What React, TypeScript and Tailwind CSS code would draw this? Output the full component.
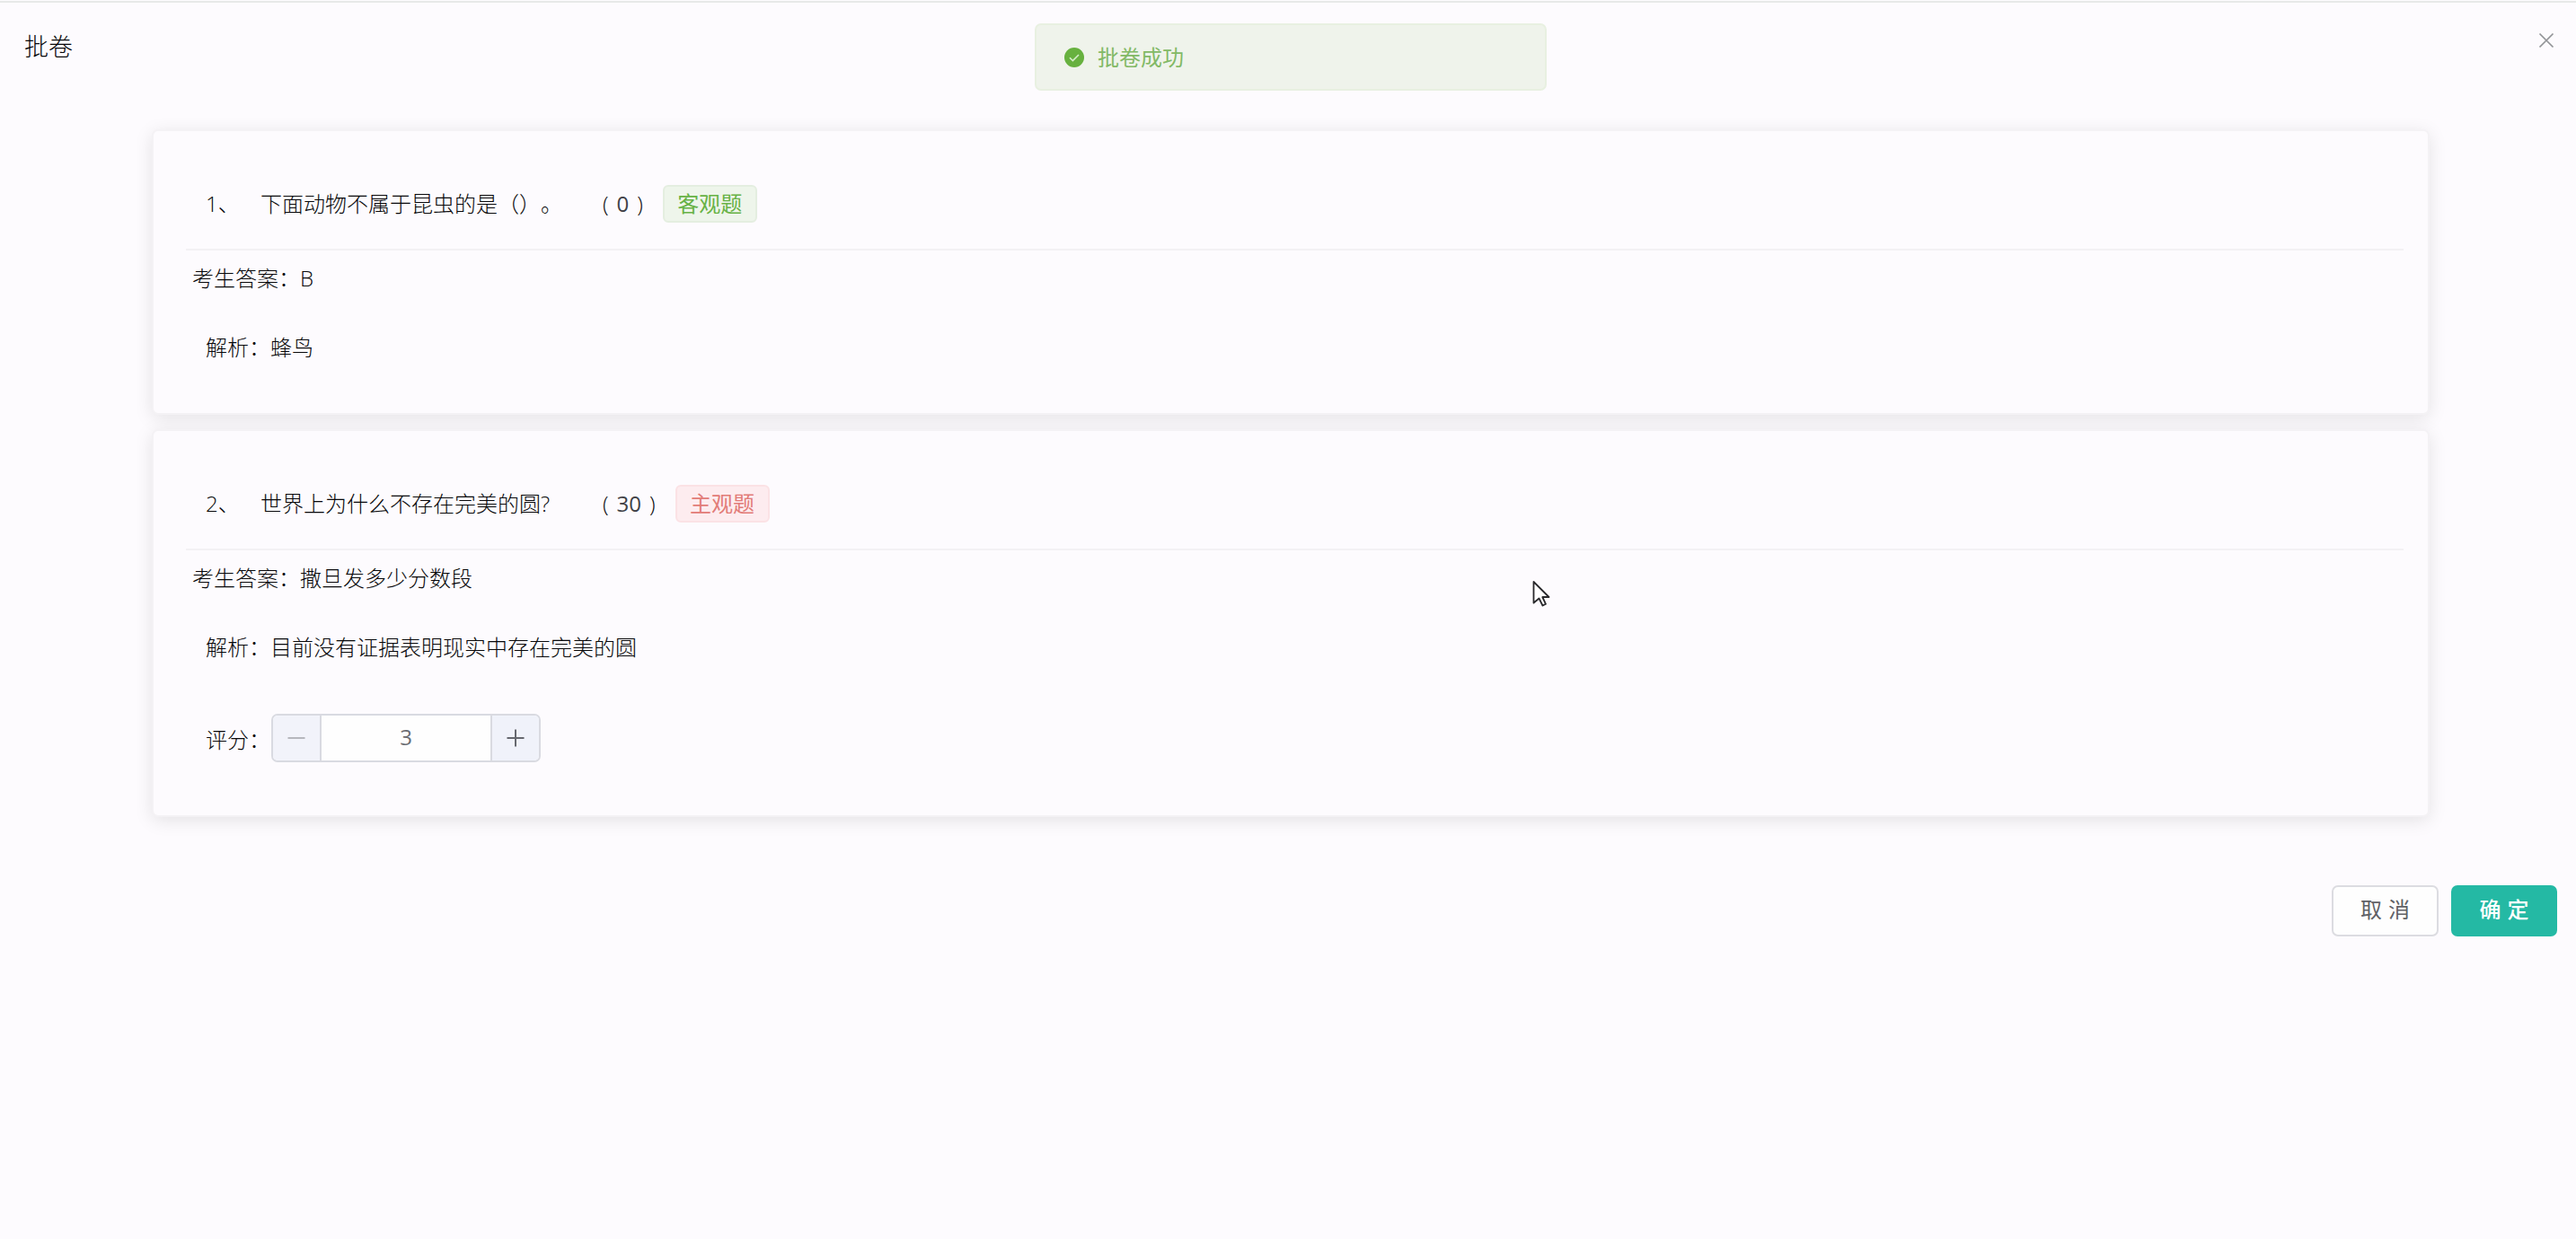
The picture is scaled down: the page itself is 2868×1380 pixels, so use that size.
import { useState, type ReactNode } from "react";

type Question = {
  id: number;
  title: string;
  score: number;
  subjective: boolean;
  answer: string;
  analysis: string;
};

const questions: Question[] = [
  {
    id: 1,
    title: "下面动物不属于昆虫的是（）。",
    score: 0,
    subjective: false,
    answer: "B",
    analysis: "蜂鸟",
  },
  {
    id: 2,
    title: "世界上为什么不存在完美的圆?",
    score: 30,
    subjective: true,
    answer: "撒旦发多少分数段",
    analysis: "目前没有证据表明现实中存在完美的圆",
  },
];

function Tag({ subjective }: { subjective: boolean }) {
  return (
    <span
      className={
        subjective
          ? "ml-[22px] flex h-[42px] w-[105px] items-center justify-center rounded-[6px] border-2 border-[#fbe2e5] bg-[#fdecef] pb-px font-normal text-[#e27b77]"
          : "ml-[22px] flex h-[42px] w-[105px] items-center justify-center rounded-[6px] border-2 border-[#e4eee0] bg-[#eef5eb] pb-px font-normal text-[#67b245]"
      }
    >
      {subjective ? "主观题" : "客观题"}
    </span>
  );
}

function Stepper() {
  const [value, setValue] = useState(3);

  return (
    <div className="flex h-[54px] w-[300px] overflow-hidden rounded-[7px] border-2 border-[#d9dae1] bg-[#fefefe]">
      <button
        className="flex w-[54px] items-center justify-center border-r-2 border-[#d9dae1] bg-[#f2f3fa]"
        onClick={() => setValue(Math.max(0, value - 1))}
      >
        <svg className="size-5" viewBox="0 0 20 20" stroke="#b6b7bd" strokeWidth="2">
          <path d="M0.5 10H19.5" />
        </svg>
      </button>
      <span className="flex flex-1 items-center justify-center pb-[3px] font-normal text-[#6b6d72]">
        {value}
      </span>
      <button
        className="flex w-[54px] items-center justify-center border-l-2 border-[#d9dae1] bg-[#f0f2fa]"
        onClick={() => setValue(value + 1)}
      >
        <svg className="size-5" viewBox="0 0 20 20" stroke="#66686f" strokeWidth="2">
          <path d="M0.5 10H19.5M10 0.5V19.5" />
        </svg>
      </button>
    </div>
  );
}

function Card({ className, children }: { className: string; children: ReactNode }) {
  return (
    <section
      className={`rounded-[7px] border-2 border-[#f4f2f5] bg-[#fdfbfe] shadow-[0_4px_20px_rgba(0,0,0,0.1)] ${className}`}
    >
      {children}
    </section>
  );
}

function QuestionCard({ question }: { question: Question }) {
  return (
    <Card className={question.subjective ? "h-[432px]" : "h-[318px]"}>
      <div className="mr-[27px] ml-[36px] flex h-[133px] items-center border-b-2 border-[#f3f1f4] pt-[31px] pl-[22px]">
        <span className="w-[61px]">{question.id}、</span>
        <span className="w-[381px]">{question.title}</span>
        <span className="flex w-max items-center">
          <span>(</span>
          <span className="mx-[9px] font-normal text-[#404146]">{question.score}</span>
          <span>)</span>
        </span>
        <Tag subjective={question.subjective} />
      </div>
      <p className="mt-[13px] pl-[43px] leading-[36px]">考生答案：{question.answer}</p>
      <p className="mt-[41px] pl-[58px] leading-[36px]">解析：{question.analysis}</p>
      {question.subjective && (
        <div className="mt-[56px] flex items-center pl-[58px]">
          <span className="w-[73px] whitespace-nowrap pt-[3px]">评分：</span>
          <Stepper />
        </div>
      )}
    </Card>
  );
}

function Message() {
  return (
    <div className="absolute top-[26px] left-[1152px] flex h-[75px] w-[570px] items-center rounded-[7px] border-2 border-[#e8f0e1] bg-[#eff3eb] pl-[31px] font-normal text-[#82b965]">
      <svg className="mr-[15px] size-[22px]" viewBox="0 0 22 22" fill="none">
        <circle cx="11" cy="11" r="11" fill="#67b13f" />
        <path d="M6 11.3L9.4 14.6L16 8" stroke="#d5edc9" strokeWidth="1.6" />
      </svg>
      批卷成功
    </div>
  );
}

export default function App() {
  return (
    <main className="relative h-[1380px] w-[2868px] overflow-hidden bg-[#fdfbfe] pt-px font-['Open_Sans','Noto_Sans_CJK_SC',sans-serif] text-[24px] font-light text-[#08080a] [text-spacing-trim:space-all]">
      <div className="h-[2px] bg-[#e7e9e8]" />
      <header className="flex h-[141px] items-start justify-between pr-[24px] pl-[27px]">
        <h1 className="mt-[29px] text-[27px] leading-[40px] font-light">批卷</h1>
        <button className="mt-[33px]">
          <svg className="size-[18px]" viewBox="0 0 18 18" stroke="#929397" strokeWidth="1.7">
            <path d="M1.5 1.5L16.5 16.5M16.5 1.5L1.5 16.5" />
          </svg>
        </button>
      </header>
      <div className="ml-[169px] flex w-[2536px] flex-col gap-[16px]">
        {questions.map((question) => (
          <QuestionCard key={question.id} question={question} />
        ))}
      </div>
      <footer className="mt-[76px] flex justify-end gap-[14px] pr-[21px]">
        <button className="h-[57px] w-[119px] rounded-[7px] border-2 border-[#dcdce1] bg-[#fefefe] pb-[3px] pl-[7px] font-normal tracking-[7px] text-[#606166]">
          取消
        </button>
        <button className="h-[57px] w-[118px] rounded-[7px] bg-[#24b9a4] pb-[3px] pl-[7px] font-medium tracking-[7px] text-white">
          确定
        </button>
      </footer>
      <Message />
      <svg className="absolute top-[646px] left-[1706px] h-[31px] w-[21px]" viewBox="0 0 21 31">
        <path
          d="M1.5 2V25.5L7.5 20.5L11.5 28.5L15 26.8L11.3 19H18.5Z"
          fill="#fff"
          stroke="#29292c"
          strokeWidth="1.8"
          strokeLinejoin="round"
        />
      </svg>
    </main>
  );
}
